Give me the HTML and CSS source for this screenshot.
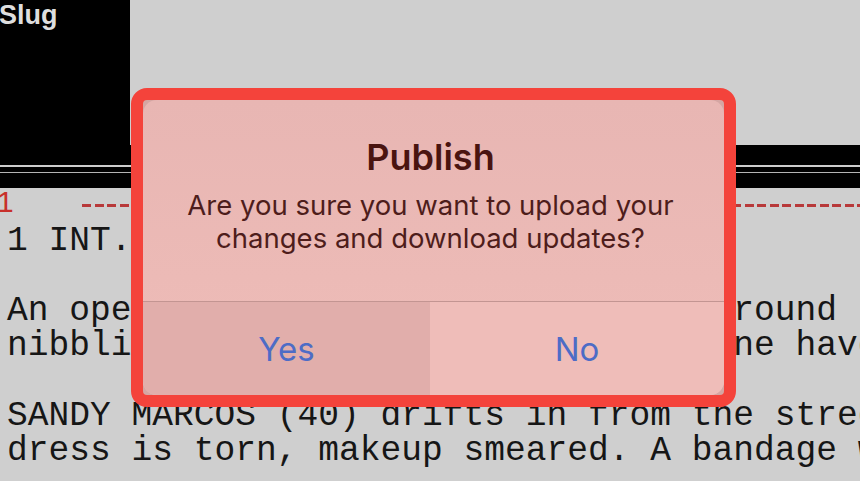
FILE: index.html
```html
<!DOCTYPE html>
<html lang="en">
<head>
    <meta charset="UTF-8">
    <meta name="viewport" content="width=device-width, initial-scale=1.0">
    <title>Script - Publish</title>
    <link rel="stylesheet" href="styles.css">
</head>
<body>
    <div class="header">
        <div class="slug-panel">Slug</div>
        <div class="header-fill"></div>
    </div>
    <div class="rule-bar">
        <div class="rule-line"></div>
        <div class="rule-line thin"></div>
    </div>

    <div class="scene-row">
        <span class="scene-num">1</span>
        <div class="scene-dashes"></div>
    </div>

    <div class="script">
        <div class="line">1 INT. BEAUTY SALON - DAY</div>
        <div class="line">&nbsp;</div>
        <div class="line">An open-air salon. Customers mill around the</div>
        <div class="line">nibbling on snacks. The women in line have</div>
        <div class="line">&nbsp;</div>
        <div class="line">SANDY MARCOS (40) drifts in from the street. Her</div>
        <div class="line">dress is torn, makeup smeared. A bandage wraps</div>
    </div>

    <!-- alert laid over the script -->
    <div class="highlight">
        <div class="alert">
            <div class="alert-body">
                <h2 class="alert-title">Publish</h2>
                <p class="alert-msg">Are you sure you want to upload your changes and download updates?</p>
            </div>
            <div class="alert-buttons">
                <button class="alert-btn yes">Yes</button>
                <button class="alert-btn no">No</button>
            </div>
        </div>
    </div>
</body>
</html>
```

FILE: styles.css
```css
html {
    overflow: hidden;
}

body {
    margin: 0;
    width: 860px;
    height: 481px;
    overflow: hidden;
    position: relative;
    background-color: #cfcfcf;
    font-family: "Liberation Mono", "DejaVu Sans Mono", monospace;
    color: #161616;
}

.header {
    display: flex;
    height: 145px;
}

.slug-panel {
    width: 130px;
    background: #000;
    color: #dedede;
    font-family: "Liberation Sans", Arial, sans-serif;
    font-weight: bold;
    font-size: 27px;
    line-height: 30px;
    text-indent: -1px;
}

.header-fill {
    flex: 1;
}

.rule-bar {
    height: 43px;
    background: #000;
    padding-top: 20px;
    box-sizing: border-box;
}

.rule-line {
    height: 2px;
    background: #cdcdcd;
    margin-bottom: 5px;
}

.rule-line.thin {
    height: 1px;
    background: #b4b4b4;
}

.scene-row {
    display: flex;
    align-items: flex-start;
    height: 35px;
}

.scene-num {
    font-family: "Liberation Sans", Arial, sans-serif;
    font-size: 30px;
    line-height: 28px;
    color: #c8302b;
    margin-left: -3px;
    width: 85px;
}

.scene-dashes {
    flex: 1;
    height: 3px;
    margin-top: 16px;
    background: repeating-linear-gradient(90deg, #b8393a 0 9px, transparent 9px 12.5px);
}

.script {
    padding-left: 7px;
    font-size: 34.6px;
    line-height: 35px;
}

.line {
    white-space: pre;
}

/* red highlight frame + iOS style alert */
.highlight {
    position: absolute;
    left: 131px;
    top: 88px;
    width: 605px;
    height: 319px;
    box-sizing: border-box;
    border: 12px solid #f4433b;
    border-radius: 16px;
    background: #d5a6a3;
    overflow: hidden;
}

.alert {
    height: 100%;
    border-radius: 14px;
    overflow: hidden;
    background: linear-gradient(180deg, #e8b6b3 0%, #ecbab6 60%, #efbdb9 100%);
    display: flex;
    flex-direction: column;
    font-family: Inter, "Noto Sans", sans-serif;
}

.alert-body {
    height: 202px;
    box-sizing: border-box;
    padding: 37px 36px 0 30px;
    text-align: center;
    border-bottom: 1px solid #c39592;
}

.alert-title {
    margin: 0;
    font-size: 36px;
    line-height: 40px;
    font-weight: 600;
    color: #4a1410;
}

.alert-msg {
    margin: 12px 0 0;
    font-size: 27.5px;
    line-height: 33px;
    color: #4e1d1b;
}

.alert-buttons {
    flex: 1;
    display: flex;
}

.alert-btn {
    flex: 1;
    border: none;
    padding: 0;
    font-family: inherit;
    font-size: 33px;
    color: #4d6cc6;
    background: #efbdb9;
}

.alert-btn.yes {
    flex: 0 0 287px;
    background: #e1aeab;
}
```
